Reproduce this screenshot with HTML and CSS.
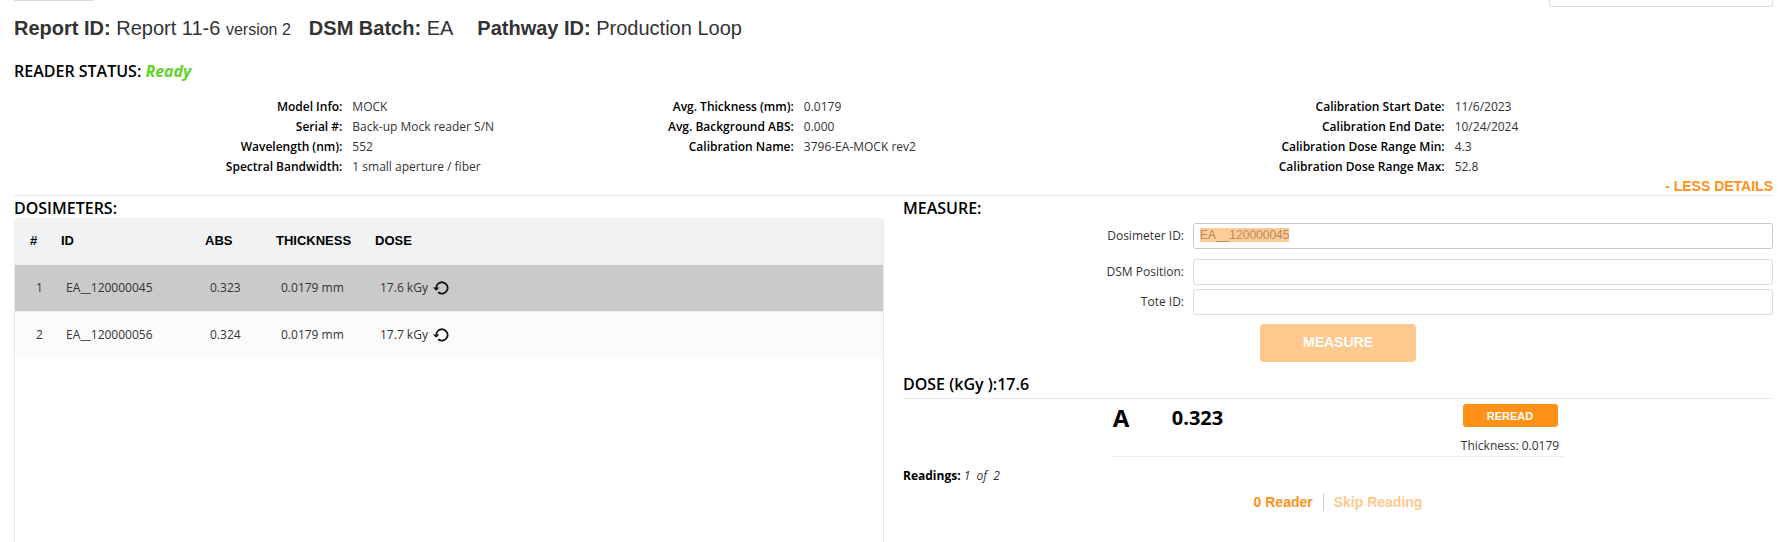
FILE: index.html
```html
<!DOCTYPE html>
<html lang="en">
<head>
    <meta charset="UTF-8">
    <meta name="viewport" content="width=device-width, initial-scale=1.0">
    <title>Measure Dosimeters</title>
    <link rel="stylesheet" href="styles.css">
</head>
<body>
    <div class="toolbar">
        <div class="toolbar-tab"></div>
        <div class="toolbar-box"></div>
    </div>

    <h1 class="report-title">
        <span><b>Report ID:</b> Report 11-6 <small>version 2</small></span>
        <span><b>DSM Batch:</b> EA</span>
        <span class="pathway"><b>Pathway ID:</b> Production Loop</span>
    </h1>

    <h2 class="heading reader-status">READER STATUS: <em>Ready</em></h2>

    <div class="details">
        <dl class="detail-group reader-info">
            <dt>Model Info:</dt><dd>MOCK</dd>
            <dt>Serial #:</dt><dd>Back-up Mock reader S/N</dd>
            <dt>Wavelength (nm):</dt><dd>552</dd>
            <dt>Spectral Bandwidth:</dt><dd>1 small aperture / fiber</dd>
        </dl>
        <dl class="detail-group averages">
            <dt>Avg. Thickness (mm):</dt><dd>0.0179</dd>
            <dt>Avg. Background ABS:</dt><dd>0.000</dd>
            <dt>Calibration Name:</dt><dd>3796-EA-MOCK rev2</dd>
        </dl>
        <dl class="detail-group calibration">
            <dt>Calibration Start Date:</dt><dd>11/6/2023</dd>
            <dt>Calibration End Date:</dt><dd>10/24/2024</dd>
            <dt>Calibration Dose Range Min:</dt><dd>4.3</dd>
            <dt>Calibration Dose Range Max:</dt><dd>52.8</dd>
        </dl>
    </div>

    <div class="details-toggle">
        <button class="link-btn" type="button">- LESS DETAILS</button>
    </div>

    <div class="workspace">
        <section class="panel">
            <h2 class="heading">DOSIMETERS:</h2>
            <div class="table-box">
                <table class="dosimeters">
                    <thead>
                        <tr>
                            <th class="col-num">#</th>
                            <th class="col-id">ID</th>
                            <th class="col-abs">ABS</th>
                            <th class="col-thickness">THICKNESS</th>
                            <th>DOSE</th>
                        </tr>
                    </thead>
                    <tbody>
                        <tr class="selected">
                            <td>1</td>
                            <td>EA__120000045</td>
                            <td>0.323</td>
                            <td>0.0179 mm</td>
                            <td>
                                <span class="dose">17.6 kGy
                                    <button class="icon-btn" type="button" aria-label="Reread 1">
                                        <svg width="16" height="14" viewBox="0 0 16 14">
                                            <path d="M3.2 7.2A5.7 5.7 0 1 1 5.2 11.3" fill="none" stroke="#111" stroke-width="1.8"/>
                                            <path d="M0 6.4h6.4L3.2 9.8z" fill="#111"/>
                                        </svg>
                                    </button>
                                </span>
                            </td>
                        </tr>
                        <tr>
                            <td>2</td>
                            <td>EA__120000056</td>
                            <td>0.324</td>
                            <td>0.0179 mm</td>
                            <td>
                                <span class="dose">17.7 kGy
                                    <button class="icon-btn" type="button" aria-label="Reread 2">
                                        <svg width="16" height="14" viewBox="0 0 16 14">
                                            <path d="M3.2 7.2A5.7 5.7 0 1 1 5.2 11.3" fill="none" stroke="#111" stroke-width="1.8"/>
                                            <path d="M0 6.4h6.4L3.2 9.8z" fill="#111"/>
                                        </svg>
                                    </button>
                                </span>
                            </td>
                        </tr>
                    </tbody>
                </table>
            </div>
        </section>

        <section class="panel">
            <h2 class="heading">MEASURE:</h2>
            <form class="measure-form">
                <div class="field field-current">
                    <label for="dosimeter-id">Dosimeter ID:</label>
                    <input id="dosimeter-id" type="text" value="EA__120000045">
                </div>
                <div class="field">
                    <label for="dsm-position">DSM Position:</label>
                    <input id="dsm-position" type="text">
                </div>
                <div class="field">
                    <label for="tote-id">Tote ID:</label>
                    <input id="tote-id" type="text">
                </div>
                <button class="measure-btn" type="button" disabled>MEASURE</button>
            </form>

            <h2 class="heading dose-heading">DOSE (kGy ):17.6</h2>

            <div class="reading">
                <span class="reading-name">A</span>
                <span class="reading-value">0.323</span>
                <div class="reading-side">
                    <button class="reread-btn" type="button">REREAD</button>
                    <span>Thickness: 0.0179</span>
                </div>
            </div>

            <p class="readings-count"><b>Readings:</b> <em>1&nbsp; of&nbsp; 2</em></p>

            <div class="actions">
                <button class="link-btn" type="button">0 Reader</button>
                <button class="link-btn" type="button" disabled>Skip Reading</button>
            </div>
        </section>
    </div>

    <script>
        // scanner input overwrites the previous id
        document.getElementById('dosimeter-id').select();
    </script>
</body>
</html>
```

FILE: styles.css
```css
:root {
    --orange: #ff9119;
    --light-orange: #ffc88c;
    --line: #e7e8ea;
    --text: #333;
}

* {
    margin: 0;
    padding: 0;
    box-sizing: border-box;
}

body {
    min-height: 100vh;
    padding: 0 12px 0 14px;
    display: flex;
    flex-direction: column;
    background: white;
    color: var(--text);
    font: 12px/20px "Open Sans", "Noto Sans", sans-serif;
}

button,
input {
    font-family: "Liberation Sans", Arial, sans-serif;
}

button {
    border: none;
    background: none;
    font-weight: bold;
    cursor: pointer;
}

.toolbar {
    display: flex;
    justify-content: space-between;
    align-items: flex-start;
}

.toolbar-tab {
    width: 79px;
    height: 1px;
    background: #d9d9d9;
}

.toolbar-box {
    width: 224px;
    height: 7px;
    border: 1px solid #ddd;
    border-top: none;
    border-radius: 0 0 3px 3px;
}

.report-title {
    margin-top: 9px;
    display: flex;
    gap: 18px;
    font: 20px/24px "Liberation Sans", Arial, sans-serif;
}

.report-title small {
    font-size: 16px;
}

.pathway {
    margin-left: 6px;
}

.heading {
    padding-top: 2px;
    color: black;
    font-size: 16px;
    font-weight: 600;
    line-height: 20px;
}

.reader-status {
    margin-top: 17px;
}

.reader-status em {
    color: #5fd32b;
    font-weight: bold;
}

.details {
    margin-top: 16px;
    display: grid;
    grid-template-columns: repeat(3, 1fr);
}

.detail-group {
    display: grid;
    column-gap: 10px;
    align-content: start;
}

.reader-info {
    grid-template-columns: 56% 1fr;
}

.averages {
    grid-template-columns: 33% 1fr;
}

.calibration {
    grid-template-columns: 44% 1fr;
}

.detail-group dt {
    color: black;
    font-weight: 600;
    text-align: right;
    white-space: nowrap;
}

.details-toggle {
    display: flex;
    justify-content: flex-end;
    border-bottom: 1px solid var(--line);
}

.link-btn {
    color: var(--orange);
    font-size: 14px;
    line-height: 18px;
}

.link-btn:disabled {
    color: var(--light-orange);
}

.workspace {
    flex: 1;
    display: grid;
    grid-template-columns: 1fr 1fr;
    gap: 19px;
}

.panel {
    display: flex;
    flex-direction: column;
}

.table-box {
    flex: 1;
    border: 1px solid var(--line);
    border-width: 0 1px;
    border-radius: 4px 4px 0 0;
    overflow: hidden;
}

.dosimeters {
    width: 100%;
    border-collapse: collapse;
    table-layout: fixed;
}

.dosimeters th {
    height: 46px;
    background: #f1f2f4;
    color: black;
    font: bold 13px/20px "Liberation Sans", Arial, sans-serif;
    text-align: left;
}

.dosimeters td {
    height: 47px;
    padding-left: 5px;
    border-top: 1px solid #efefef;
}

.dosimeters th:first-child {
    padding-left: 15px;
}

.dosimeters td:first-child {
    padding-left: 21px;
}

.dosimeters tbody tr {
    background: #fbfbfb;
}

.dosimeters .selected {
    background: #cacaca;
}

.col-num {
    width: 46px;
}

.col-id {
    width: 144px;
}

.col-abs {
    width: 71px;
}

.col-thickness {
    width: 99px;
}

.dose {
    display: flex;
    align-items: center;
    gap: 5px;
}

.icon-btn {
    display: flex;
}

.measure-form {
    padding-top: 5px;
    display: flex;
    flex-direction: column;
    gap: 4px;
}

.field {
    display: grid;
    grid-template-columns: 1fr 2fr;
    align-items: center;
}

.field-current {
    margin-bottom: 6px;
}

.field label {
    padding-right: 9px;
    text-align: right;
}

.field input {
    height: 26px;
    padding: 0 6px 3px;
    border: 1px solid #dcdcdc;
    border-radius: 3px;
    background: white;
    color: #b98a5a;
    font-size: 12px;
    outline: none;
}

.field-current input {
    border-color: #c8c8c8;
}

.field input::selection {
    background: #ffcc99;
    color: #b98a5a;
}

.measure-btn {
    width: 18%;
    height: 38px;
    margin: 5px 0 0 41%;
    padding-bottom: 2px;
    border-radius: 4px;
    background: var(--light-orange);
    color: white;
    font-size: 14px;
}

.dose-heading {
    margin-top: 10px;
    padding-bottom: 4px;
    border-bottom: 1px solid var(--line);
}

.reading {
    width: 52%;
    margin-left: 24%;
    padding: 5px 5px 0 1px;
    display: flex;
    align-items: flex-start;
    border-bottom: 1px solid #ececec;
    color: black;
    font-weight: bold;
}

.reading-name {
    width: 59px;
    font-size: 24px;
    line-height: 28px;
}

.reading-value {
    font-size: 20px;
    line-height: 28px;
}

.reading-side {
    margin-left: auto;
    display: flex;
    flex-direction: column;
    align-items: center;
    gap: 9px;
    color: var(--text);
    font-weight: normal;
}

.reread-btn {
    width: 95px;
    height: 23px;
    border-radius: 3px;
    background: var(--orange);
    color: white;
    font-size: 11px;
}

.readings-count {
    margin-top: 9px;
}

.readings-count b {
    color: black;
}

.actions {
    margin-top: 7px;
    display: flex;
    justify-content: center;
}

.actions .link-btn {
    padding: 0 10px;
}

.actions .link-btn + .link-btn {
    border-left: 1px solid #ccc;
}
```
